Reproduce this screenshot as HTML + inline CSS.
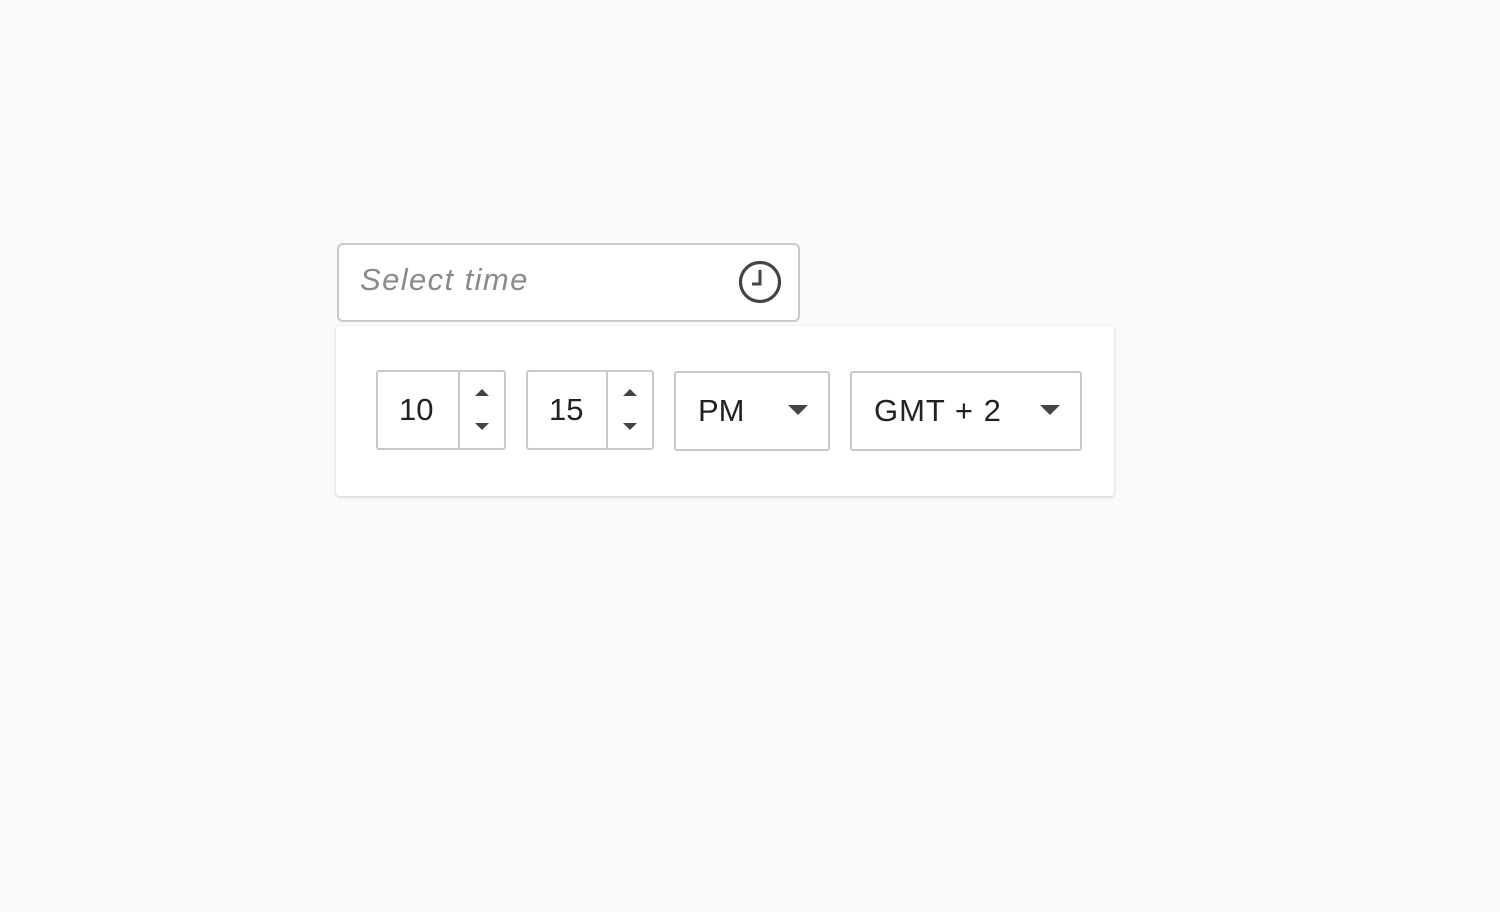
<!DOCTYPE html>
<html><head><style>
body{margin:0;width:1500px;height:912px;background:#f9fafc;font-family:"Liberation Sans",sans-serif;position:relative;overflow:hidden}
.a{position:absolute;box-sizing:border-box}
.inp{left:337px;top:243px;width:463px;height:79px;border:2px solid #c9c9c9;border-radius:6px;background:#fff}
.ph{left:360px;top:262px;font-size:31px;font-style:italic;color:#8a8a8a;letter-spacing:1.4px}
.panel{left:336px;top:326px;width:778px;height:170px;background:#fff;border-radius:3px;box-shadow:0 1px 3px rgba(0,0,0,.18)}
.box{border:2px solid #c9c9c9;border-radius:3px;background:#fff}
.t{font-size:31px;color:#222;line-height:1}
.div{width:2px;background:#c9c9c9}
.up,.dn{width:0;height:0;border-left:7px solid transparent;border-right:7px solid transparent}
.up{border-bottom:7px solid #444}
.dn{border-top:7px solid #444}
.dd{width:0;height:0;border-left:10px solid transparent;border-right:10px solid transparent;border-top:10px solid #444}
</style></head><body>
<div class="a inp"></div>
<div class="a ph">Select time</div>
<svg class="a" style="left:736px;top:258px" width="48" height="48" viewBox="0 0 48 48"><circle cx="24" cy="24" r="19.5" fill="none" stroke="#444" stroke-width="3.2"/><path d="M24 12V26H16" fill="none" stroke="#444" stroke-width="3"/></svg>
<div class="a panel"></div>
<div class="a box" style="left:376px;top:370px;width:130px;height:80px"></div>
<div class="a div" style="left:458px;top:371px;height:78px"></div>
<div class="a t" style="left:399px;top:394px">10</div>
<div class="a up" style="left:475px;top:389px"></div>
<div class="a dn" style="left:475px;top:423px"></div>
<div class="a box" style="left:526px;top:370px;width:128px;height:80px"></div>
<div class="a div" style="left:606px;top:371px;height:78px"></div>
<div class="a t" style="left:549px;top:394px">15</div>
<div class="a up" style="left:623px;top:389px"></div>
<div class="a dn" style="left:623px;top:423px"></div>
<div class="a box" style="left:674px;top:371px;width:156px;height:80px"></div>
<div class="a t" style="left:698px;top:395px">PM</div>
<div class="a dd" style="left:788px;top:405px"></div>
<div class="a box" style="left:850px;top:371px;width:232px;height:80px"></div>
<div class="a t" style="left:874px;top:395px;letter-spacing:1px">GMT + 2</div>
<div class="a dd" style="left:1040px;top:405px"></div>
</body></html>
